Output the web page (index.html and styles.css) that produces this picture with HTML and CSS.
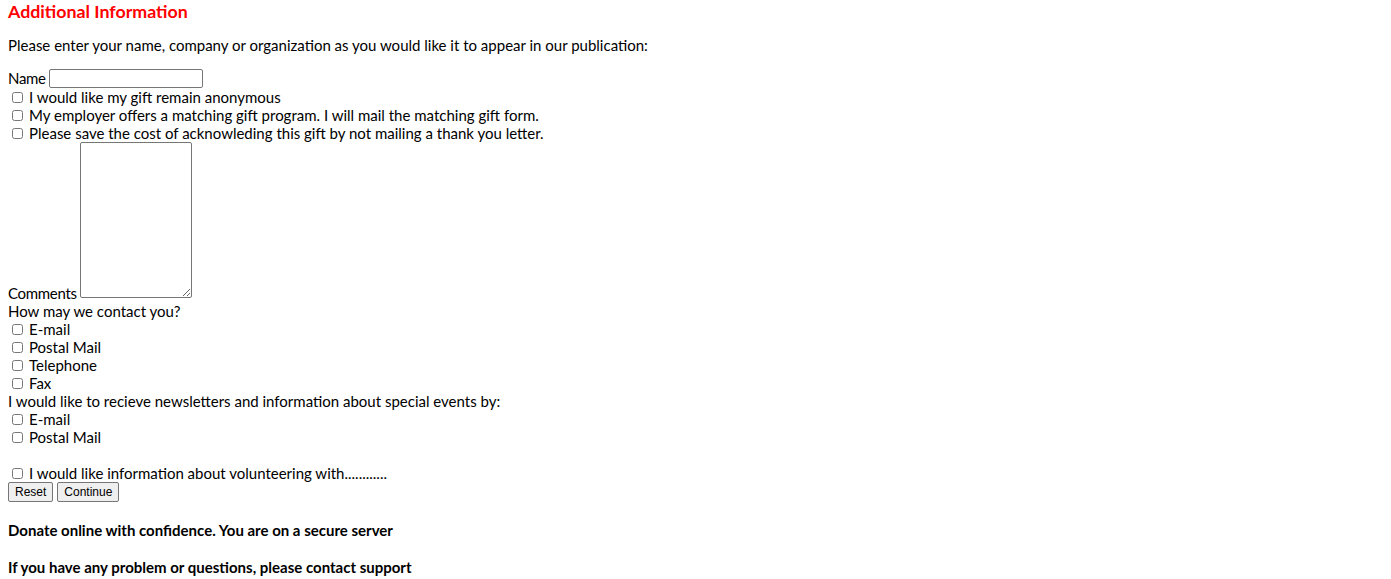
FILE: index.html
```html
<!DOCTYPE html>
<html>
<head>
<meta charset="utf-8">
<title>Additional Information</title>
<link rel="stylesheet" href="styles.css">
</head>
<body>
<div class="page">
  <h1 class="title">Additional Information</h1>
  <p class="intro">Please enter your name, company or organization as you would like it to appear in our publication:</p>
  <form class="form">
    <div class="row row-name"><label class="lbl" for="name">Name</label><input class="text-in" type="text" id="name"></div>
    <div class="row"><input class="cb" type="checkbox"><span>I would like my gift remain anonymous</span></div>
    <div class="row"><input class="cb" type="checkbox"><span>My employer offers a matching gift program. I will mail the matching gift form.</span></div>
    <div class="row"><input class="cb" type="checkbox"><span>Please save the cost of acknowleding this gift by not mailing a thank you letter.</span></div>
    <div class="row row-comments"><label class="lbl" for="comments">Comments</label><textarea class="comments" id="comments"></textarea></div>
    <div class="row">How may we contact you?</div>
    <div class="row"><input class="cb" type="checkbox"><span>E-mail</span></div>
    <div class="row"><input class="cb" type="checkbox"><span>Postal Mail</span></div>
    <div class="row"><input class="cb" type="checkbox"><span>Telephone</span></div>
    <div class="row"><input class="cb" type="checkbox"><span>Fax</span></div>
    <div class="row">I would like to recieve newsletters and information about special events by:</div>
    <div class="row"><input class="cb" type="checkbox"><span>E-mail</span></div>
    <div class="row"><input class="cb" type="checkbox"><span>Postal Mail</span></div>
    <div class="row"></div>
    <div class="row"><input class="cb" type="checkbox"><span>I would like information about volunteering with............</span></div>
    <div class="buttons"><button class="btn" type="reset">Reset</button><button class="btn" type="button">Continue</button></div>
  </form>
  <p class="note">Donate online with confidence. You are on a secure server</p>
  <p class="note">If you have any problem or questions, please contact support</p>
</div>
</body>
</html>
```
FILE: styles.css
```css
html, body {
  margin: 0;
  padding: 0;
  background: #ffffff;
}
.page {
  padding: 0 8px;
  font-family: "Lato", "Open Sans", sans-serif;
  font-size: 15px;
  line-height: 18px;
  color: #000000;
}
.title {
  margin: 0;
  font-size: 17.8px;
  line-height: 22px;
  font-weight: bold;
  color: #ff0000;
}
.intro {
  margin: 14px 0 14px 0;
}
.form {
  margin: 0;
}
.row {
  display: flex;
  align-items: center;
  height: 18px;
  white-space: nowrap;
}
.lbl {
  letter-spacing: -0.3px;
}
.row-name {
  height: 20px;
  gap: 3px;
}
.text-in {
  box-sizing: border-box;
  width: 154px;
  height: 19px;
  margin: 0;
  padding: 1px 2px;
  border: 1px solid #767676;
  border-radius: 2px;
  font-family: "Liberation Sans", sans-serif;
  font-size: 13px;
}
.cb {
  width: 11px;
  height: 11px;
  margin: 0 6px 0 4px;
  flex: none;
}
.row-comments {
  height: 160px;
  align-items: flex-end;
  gap: 3px;
}
.comments {
  box-sizing: border-box;
  width: 112px;
  height: 156px;
  padding: 2px;
  margin: 0 0 4px 0;
  border: 1px solid #767676;
  border-radius: 2px;
  font-family: "Liberation Mono", monospace;
  font-size: 13px;
}
.buttons {
  display: flex;
  gap: 4px;
  height: 20px;
}
.btn {
  box-sizing: border-box;
  height: 20px;
  font-family: "Liberation Sans", sans-serif;
  font-size: 12px;
  line-height: 14px;
  padding: 1px 6px;
  margin: 0;
  color: #000000;
  background: #efefef;
  border: 1px solid #767676;
  border-radius: 2px;
}
.note {
  margin: 19px 0 0 0;
  font-weight: bold;
}
```
